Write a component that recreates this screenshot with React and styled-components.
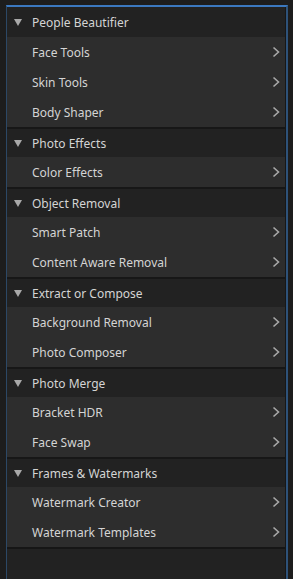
import React from "react";
import styled, { createGlobalStyle } from "styled-components";

const Global = createGlobalStyle`
  html, body {
    margin: 0;
    padding: 0;
    background: #1d1d1d;
  }
  body {
    font-family: "Noto Sans", "Open Sans", sans-serif;
  }
`;

const Page = styled.div`
  width: 293px;
  height: 579px;
  padding: 5px 0 0 6px;
  box-sizing: border-box;
  background: #1d1d1d;
  overflow: hidden;
`;

const Frame = styled.div`
  width: 282px;
  height: 574px;
  box-sizing: border-box;
  border-top: 2px solid #3b78bf;
  border-left: 1px solid #2c4866;
  border-right: 2px solid #2e5279;
  display: flex;
  flex-direction: column;
`;

const Panel = styled.div`
  flex: 1;
  display: flex;
  flex-direction: column;
  border-right: 1px solid #171717;
  background: #222222;
`;

const Header = styled.div`
  height: 30px;
  box-sizing: border-box;
  display: flex;
  align-items: center;
  padding-left: 7px;
  background: #222222;
  border-top: ${(p) => (p.$first ? "none" : "2px solid #171717")};
  color: #d4d4d4;
  font-size: 12px;
`;

const Triangle = styled.span`
  width: 0;
  height: 0;
  border-left: 4.5px solid transparent;
  border-right: 4.5px solid transparent;
  border-top: 7px solid #a9a9a9;
  margin-right: 10px;
  margin-top: 1px;
`;

const Item = styled.div`
  height: 30px;
  box-sizing: border-box;
  display: flex;
  align-items: center;
  justify-content: space-between;
  padding: 0 4px 0 25px;
  background: #2d2d2d;
  color: #d4d4d4;
  font-size: 12px;
`;

const Footer = styled.div`
  flex: 1;
  border-top: 2px solid #161616;
  background: #222222;
`;

const Chevron = () => (
  <svg width="10" height="12" viewBox="0 0 10 12">
    <polyline points="2.5,1.5 7.5,6 2.5,10.5" fill="none" stroke="#a8a8a8" strokeWidth="1.6" />
  </svg>
);

const sections = [
  { title: "People Beautifier", items: ["Face Tools", "Skin Tools", "Body Shaper"] },
  { title: "Photo Effects", items: ["Color Effects"] },
  { title: "Object Removal", items: ["Smart Patch", "Content Aware Removal"] },
  { title: "Extract or Compose", items: ["Background Removal", "Photo Composer"] },
  { title: "Photo Merge", items: ["Bracket HDR", "Face Swap"] },
  { title: "Frames & Watermarks", items: ["Watermark Creator", "Watermark Templates"] },
];

export default function App() {
  return (
    <Page>
      <Global />
      <Frame>
        <Panel>
          {sections.map((s, i) => (
            <React.Fragment key={s.title}>
              <Header $first={i === 0}>
                <Triangle />
                {s.title}
              </Header>
              {s.items.map((it) => (
                <Item key={it}>
                  {it}
                  <Chevron />
                </Item>
              ))}
            </React.Fragment>
          ))}
          <Footer />
        </Panel>
      </Frame>
    </Page>
  );
}
